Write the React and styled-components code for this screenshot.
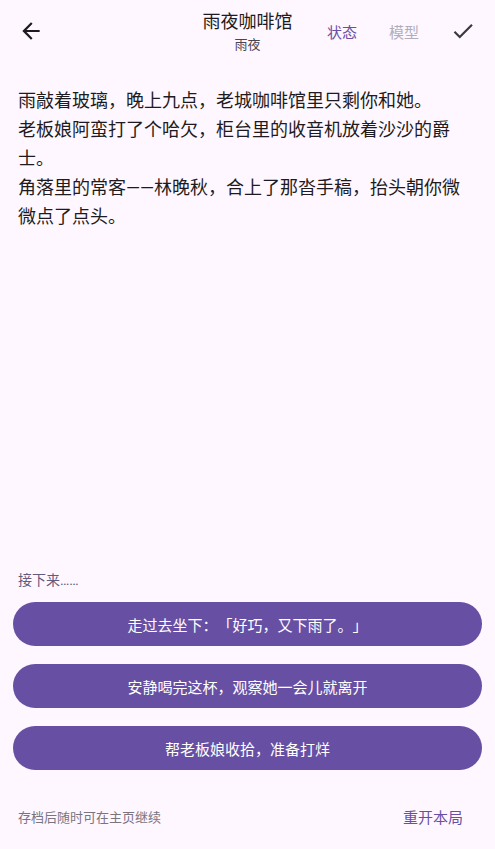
import React from "react";
import styled, { createGlobalStyle } from "styled-components";

const Global = createGlobalStyle`
  html, body {
    margin: 0;
    padding: 0;
    background: #fef7ff;
  }
  body {
    font-family: Roboto, "Noto Sans CJK SC", sans-serif;
    color: #1d1b20;
    text-spacing-trim: space-all;
  }
  button { text-spacing-trim: space-all; }
  * { box-sizing: border-box; }
`;

const Screen = styled.div`
  width: 495px;
  height: 849px;
  background: #fef7ff;
  display: flex;
  flex-direction: column;
  overflow: hidden;
`;

const TopBar = styled.header`
  height: 62px;
  display: grid;
  grid-template-columns: 1fr auto 1fr;
  align-items: center;
  flex-shrink: 0;
`;

const Left = styled.div`
  display: flex;
  align-items: center;
  padding-left: 7px;
`;

const Right = styled.div`
  display: flex;
  align-items: center;
  justify-content: flex-end;
  gap: 8px;
  padding-right: 8px;
`;

const IconButton = styled.button`
  width: 48px;
  height: 48px;
  border: none;
  background: transparent;
  padding: 0;
  display: flex;
  align-items: center;
  justify-content: center;
  color: #1d1b20;
  cursor: pointer;
`;

const TitleBlock = styled.div`
  align-self: start;
  padding-top: 10px;
  display: flex;
  flex-direction: column;
  align-items: center;
`;

const Title = styled.div`
  font-size: 18px;
  line-height: 24px;
  font-weight: 400;
  color: #1d1b20;
`;

const Subtitle = styled.div`
  font-size: 13px;
  line-height: 22px;
  font-weight: 400;
  color: #49454f;
`;

const TextAction = styled.button`
  border: none;
  background: transparent;
  height: 40px;
  padding: 0 12px;
  font-family: Roboto, "Noto Sans CJK SC", sans-serif;
  font-size: 15px;
  font-weight: 400;
  color: ${(p) => (p.$disabled ? "#b3adb9" : "#6750a4")};
  cursor: pointer;
`;

const Story = styled.main`
  flex: 1;
  padding: 24px 18px 0 18px;
`;

const Para = styled.p`
  margin: 0;
  font-size: 18px;
  line-height: 29px;
  font-weight: 400;
  color: #1d1b20;
`;

const Bottom = styled.section`
  display: flex;
  flex-direction: column;
  padding: 0 13px;
`;

const Prompt = styled.div`
  font-size: 14px;
  line-height: 20px;
  color: #625b80;
  padding-left: 5px;
  margin-bottom: 12px;
`;

const Choices = styled.div`
  display: flex;
  flex-direction: column;
  gap: 18px;
`;

const Choice = styled.button`
  height: 44px;
  width: 100%;
  border: none;
  border-radius: 22px;
  background: #6750a4;
  color: #ffffff;
  font-family: Roboto, "Noto Sans CJK SC", sans-serif;
  font-size: 15px;
  font-weight: 400;
  cursor: pointer;
`;

const Footer = styled.footer`
  display: flex;
  align-items: center;
  justify-content: space-between;
  padding: 0 20px 0 18px;
  height: 56px;
  margin-top: 18px;
  margin-bottom: 5px;
`;

const Hint = styled.span`
  font-size: 13px;
  color: #79747e;
`;

const Restart = styled.button`
  border: none;
  background: transparent;
  padding: 0 12px;
  height: 40px;
  font-family: Roboto, "Noto Sans CJK SC", sans-serif;
  font-size: 15px;
  color: #6750a4;
  cursor: pointer;
`;

const ArrowBack = () => (
  <svg width="26" height="26" viewBox="0 0 24 24" fill="currentColor">
    <path d="M20 11H7.83l5.59-5.59L12 4l-8 8 8 8 1.41-1.41L7.83 13H20v-2z" />
  </svg>
);

const Check = () => (
  <svg width="26" height="26" viewBox="0 0 24 24" fill="#3a373f">
    <path d="M9 16.17L4.83 12l-1.42 1.41L9 19 21 7l-1.41-1.41z" />
  </svg>
);

const paragraphs = [
  "雨敲着玻璃，晚上九点，老城咖啡馆里只剩你和她。",
  "老板娘阿蛮打了个哈欠，柜台里的收音机放着沙沙的爵士。",
  "角落里的常客——林晚秋，合上了那沓手稿，抬头朝你微微点了点头。",
];

const choices = [
  "走过去坐下：「好巧，又下雨了。」",
  "安静喝完这杯，观察她一会儿就离开",
  "帮老板娘收拾，准备打烊",
];

export default function App() {
  return (
    <>
      <Global />
      <Screen>
        <TopBar>
          <Left>
            <IconButton aria-label="返回">
              <ArrowBack />
            </IconButton>
          </Left>
          <TitleBlock>
            <Title>雨夜咖啡馆</Title>
            <Subtitle>雨夜</Subtitle>
          </TitleBlock>
          <Right>
            <TextAction>状态</TextAction>
            <TextAction $disabled>模型</TextAction>
            <IconButton aria-label="完成">
              <Check />
            </IconButton>
          </Right>
        </TopBar>
        <Story>
          {paragraphs.map((t) => (
            <Para key={t}>{t}</Para>
          ))}
        </Story>
        <Bottom>
          <Prompt>接下来……</Prompt>
          <Choices>
            {choices.map((c) => (
              <Choice key={c}>{c}</Choice>
            ))}
          </Choices>
        </Bottom>
        <Footer>
          <Hint>存档后随时可在主页继续</Hint>
          <Restart>重开本局</Restart>
        </Footer>
      </Screen>
    </>
  );
}
